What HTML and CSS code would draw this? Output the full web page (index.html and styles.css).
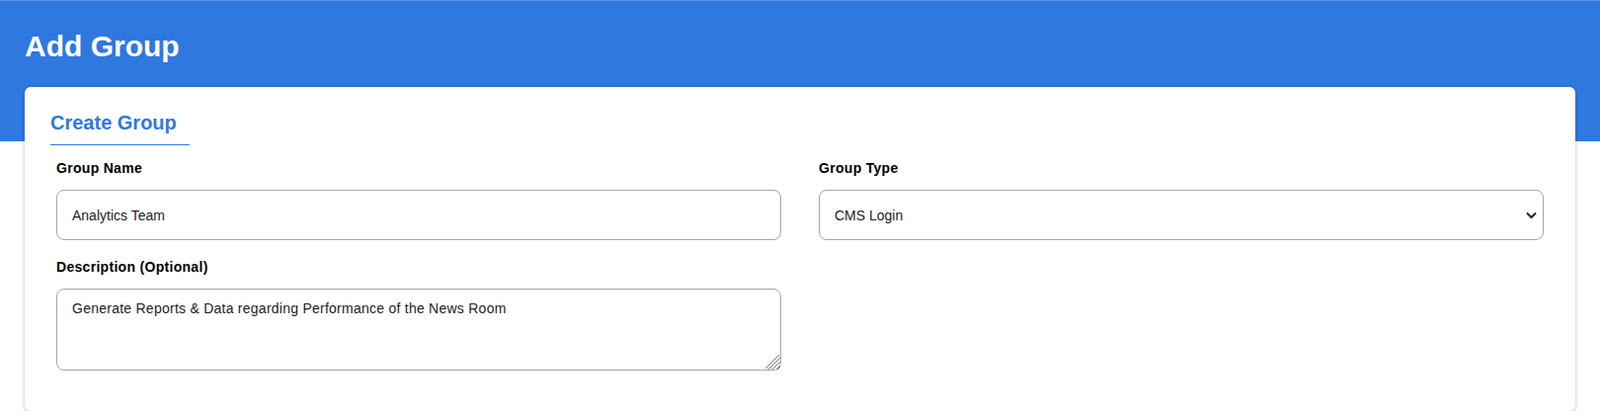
FILE: index.html
```html
<!DOCTYPE html>
<html lang="en">
<head>
    <meta charset="UTF-8">
    <meta name="viewport" content="width=device-width, initial-scale=1.0">
    <title>Add Group</title>
    <link rel="stylesheet" href="styles.css">
</head>
<body>
    <div class="page-header">
        <h1>Add Group</h1>
    </div>

    <div class="card">
        <div class="tab">Create Group</div>
        <form class="group-form">
            <div class="field">
                <label for="group-name">Group Name</label>
                <input type="text" id="group-name" value="Analytics Team">
            </div>
            <div class="field">
                <label for="group-type">Group Type</label>
                <div class="select-wrap">
                    <select id="group-type">
                        <option>CMS Login</option>
                        <option>API Access</option>
                    </select>
                    <svg class="chevron" width="11" height="7" viewBox="0 0 11 7">
                        <path d="M1 1 L5.5 5.5 L10 1" fill="none" stroke="#222" stroke-width="2"/>
                    </svg>
                </div>
            </div>
            <div class="field">
                <label for="description">Description (Optional)</label>
                <textarea id="description">Generate Reports &amp; Data regarding Performance of the News Room</textarea>
            </div>
        </form>
    </div>
</body>
</html>
```

FILE: styles.css
```css
body {
    margin: 0;
    background: #fff;
    font-family: "Liberation Sans", Arial, sans-serif;
    color: #000;
}
.page-header {
    box-sizing: border-box;
    height: 143px;
    padding: 29px 25px 0;
    background: #2f78e0;
    border-top: 1px solid #5b93e6;
}
.page-header h1 {
    margin: 0;
    font-size: 30px;
    font-weight: bold;
    color: #fff;
}
.card {
    margin: -55px 25px 0;
    padding: 25px 26px 41px;
    background: #fff;
    border-radius: 6px;
    box-shadow: 0 1px 4px rgba(0,0,0,0.25);
}
.tab {
    width: fit-content;
    padding: 0 13px 10px 0;
    font-size: 20px;
    font-weight: bold;
    line-height: 23px;
    color: #2f78e0;
    border-bottom: 1px solid #2f78e0;
}
.group-form {
    display: grid;
    grid-template-columns: 1fr 1fr;
    column-gap: 38px;
    row-gap: 19px;
    margin-top: 15px;
    padding: 0 6px;
}
.field label {
    display: block;
    margin-bottom: 14px;
    font-size: 14px;
    font-weight: bold;
    line-height: 16px;
    letter-spacing: 0.3px;
    color: #000;
}
.field input,
.field select,
.field textarea {
    display: block;
    box-sizing: border-box;
    width: 100%;
    border: 1px solid #a6a6a6;
    border-radius: 8px;
    background: #fff;
    font-family: "Liberation Sans", Arial, sans-serif;
    font-size: 14px;
    color: #222;
    outline: none;
}
.field input,
.field select {
    height: 51px;
    padding: 0 15px;
}
.field select {
    appearance: none;
    -webkit-appearance: none;
}
.field textarea {
    height: 83px;
    padding: 11px 15px;
    line-height: 16px;
    letter-spacing: 0.25px;
    resize: vertical;
}
.field textarea::-webkit-resizer {
    width: 16px;
    height: 16px;
    background: linear-gradient(-45deg,
        transparent 0 2px, #777 2px 3px,
        transparent 3px 5px, #777 5px 6px,
        transparent 6px 8px, #777 8px 9px,
        transparent 9px 11px, #777 11px 12px,
        transparent 12px);
}
.select-wrap {
    position: relative;
}
.chevron {
    position: absolute;
    right: 7px;
    top: 50%;
    transform: translateY(-50%);
    pointer-events: none;
}
```
